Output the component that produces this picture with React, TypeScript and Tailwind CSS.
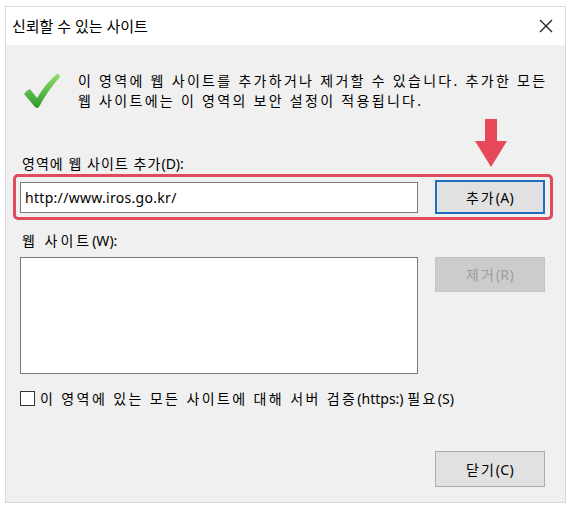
const FONT = "font-['Noto_Sans','Noto_Sans_CJK_KR',sans-serif]";

function CheckIcon() {
  return (
    <svg width="40" height="40" viewBox="0 0 40 40">
      <defs>
        <linearGradient id="chk" x1="0" y1="0" x2="0" y2="1">
          <stop offset="0" stopColor="#8fe06a" />
          <stop offset="1" stopColor="#2e9a2e" />
        </linearGradient>
      </defs>
      <path
        d="M2 23 Q5 19 8 18 L15 27 Q24 12 35 3 Q38 3 38 6 Q26 19 17 36 Q15 38 13 36 Z"
        fill="url(#chk)"
      />
    </svg>
  );
}

function DownArrow() {
  return (
    <svg width="34" height="48" viewBox="0 0 34 48">
      <rect x="11" y="0" width="12" height="23" fill="#e64a5a" />
      <polygon points="1,22 33,22 17,48" fill="#e64a5a" />
    </svg>
  );
}

function WinButton({ label, key2, disabled, focused }: { label: string; key2: string; disabled?: boolean; focused?: boolean }) {
  return (
    <button
      className={
        disabled
          ? "w-[110px] h-[35px] bg-[#cccccc] border border-[#c4c4c4] text-[#9c9c9c] text-[14px]"
          : focused
          ? "w-[110px] h-[34px] bg-[#e1e1e1] border-2 border-[#1f6fc0] text-black text-[14px]"
          : "w-[110px] h-[36px] bg-[#e1e1e1] border border-[#adadad] text-black text-[14px]"
      }
    >
      <span className="tracking-[2px]">{label}</span>
      <span className="tracking-[0.3px]">{key2}</span>
    </button>
  );
}

export default function App() {
  return (
    <div className={`w-[571px] h-[512px] bg-white pt-[6px] pl-[5px] ${FONT}`}>
      <div className="w-[561px] h-[497px] border border-[#d9d9d9] flex flex-col">
        <div className="h-[38px] bg-white flex items-center justify-between pl-[6px] pr-[12px]">
          <span className="text-[15px] text-black">신뢰할 수 있는 사이트</span>
          <svg width="14" height="14" viewBox="0 0 14 14">
            <path d="M1 1 L13 13 M13 1 L1 13" stroke="#222" strokeWidth="1.3" />
          </svg>
        </div>
        <div className="relative flex-1 bg-[#f0f0f0] px-[14px] flex flex-col">
          <div className="flex items-start pt-[22px]">
            <div className="w-[58px] pt-[4px] pl-[2px]">
              <CheckIcon />
            </div>
            <p className="text-[14px] leading-[20px] text-black pt-[4px] tracking-[2.3px] whitespace-nowrap">
              이 영역에 웹 사이트를 추가하거나 제거할 수 있습니다. 추가한 모든
              <br />
              웹 사이트에는 이 영역의 보안 설정이 적용됩니다.
            </p>
          </div>

          <div className="absolute left-[468px] top-[74px]">
            <DownArrow />
          </div>

          <p className="mt-[43px] text-[14px] leading-[20px] text-black pl-[2px] tracking-[1.05px]">
            영역에 웹 사이트 추가<span className="tracking-normal">(D):</span>
          </p>
          <div className="-ml-[7px] w-[540px] h-[46px] border-[3px] border-[#e04a5c] rounded-[5px] flex items-center pl-[4px] pr-[5px] justify-between">
            <div className="w-[398px] h-[31px] bg-white border border-[#7a7a7a] flex items-center px-[4px] text-[14px] text-black tracking-[0.3px]">
              http://www.iros.go.kr/
            </div>
            <WinButton label="추가" key2="(A)" focused />
          </div>

          <p className="mt-[11px] text-[14px] leading-[20px] text-black pl-[2px] tracking-[3px]">
            웹 사이트<span className="tracking-normal">(W):</span>
          </p>
          <div className="mt-[6px] flex justify-between pr-[6px] items-start">
            <div className="w-[398px] h-[117px] bg-white border border-[#7a7a7a]" />
            <WinButton label="제거" key2="(R)" disabled />
          </div>

          <div className="mt-[14px] flex items-center h-[20px]">
            <div className="w-[15px] h-[15px] bg-white border border-[#333]" />
            <span className="ml-[5px] text-[14px] text-black tracking-[2.4px] whitespace-nowrap">
              이 영역에 있는 모든 사이트에 대해 서버 검증<span className="tracking-normal">(https:) </span>필요<span className="tracking-normal">(S)</span>
            </span>
          </div>

          <div className="mt-[43px] flex justify-end pr-[6px]">
            <WinButton label="닫기" key2="(C)" />
          </div>
        </div>
      </div>
    </div>
  );
}
